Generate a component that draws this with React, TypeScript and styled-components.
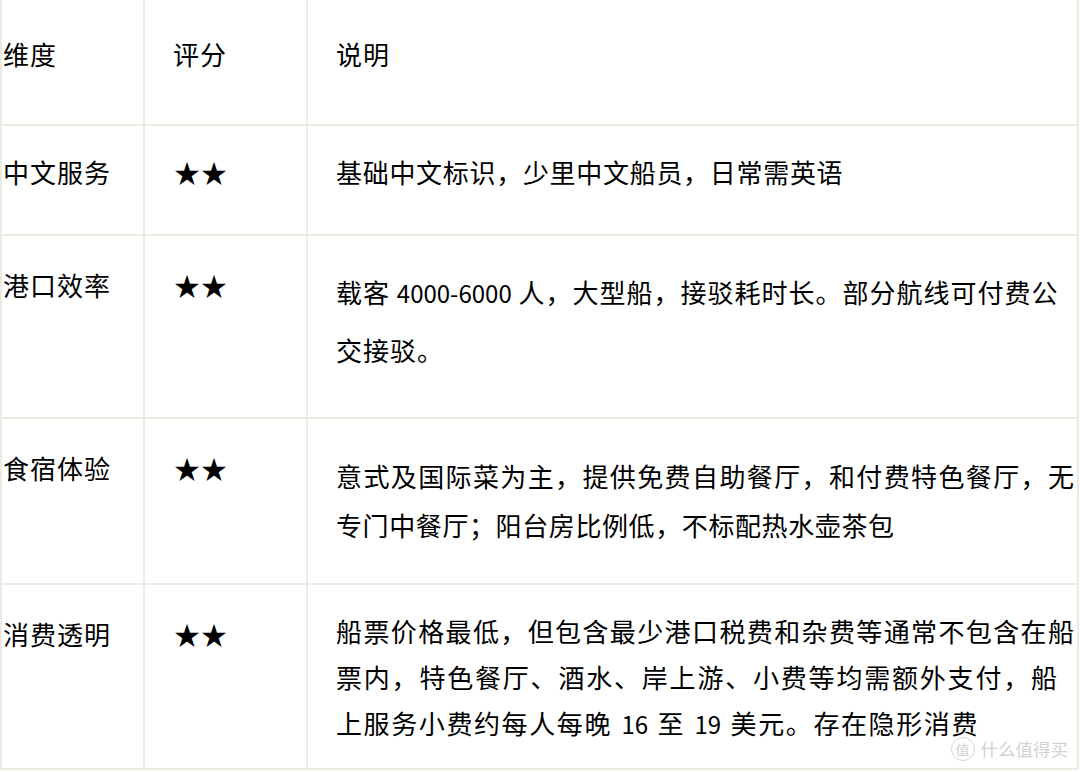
import React from 'react';
import styled, { createGlobalStyle } from 'styled-components';

const GlobalStyle = createGlobalStyle`
  html, body {
    margin: 0;
    padding: 0;
    background: #ffffff;
  }
  body {
    font-family: "Noto Sans CJK SC", "Noto Sans", sans-serif;
    color: #000000;
  }
`;

const Table = styled.div`
  position: relative;
  display: grid;
  grid-template-columns: 141px 161px 769px;
  grid-template-rows: 124px 108px 181px 164px 183px;
  gap: 2px;
  padding: 0 2px 2px 2px;
  width: fit-content;
  background: #edeae1;
`;

const Cell = styled.div<{ $top: number; $left: number; $lh?: number }>`
  background: #ffffff;
  padding-top: ${({ $top }) => $top}px;
  padding-left: ${({ $left }) => $left}px;
  font-family: "Noto Sans CJK SC", sans-serif;
  font-size: 26px;
  letter-spacing: 1px;
  line-height: ${({ $lh }) => $lh ?? 40}px;
  color: #000000;
  overflow: hidden;
`;

const Line = styled.span<{ $justify?: boolean; $spacing?: number; $word?: number }>`
  display: block;
  white-space: nowrap;
  text-align: ${({ $justify }) => ($justify ? 'justify' : 'left')};
  text-align-last: ${({ $justify }) => ($justify ? 'justify' : 'auto')};
  padding-right: ${({ $justify }) => ($justify ? '2px' : '0')};
  letter-spacing: ${({ $spacing }) => $spacing ?? 1}px;
  word-spacing: ${({ $word }) => $word ?? 0}px;
`;

const Num = styled.span`
  font-size: 24px;
  letter-spacing: 0;
`;

const Stars = styled.span`
  font-family: "Noto Sans CJK SC", sans-serif;
  letter-spacing: 1px;
`;

const Watermark = styled.div`
  position: absolute;
  right: 11px;
  bottom: 9px;
  display: flex;
  align-items: center;
  gap: 6px;
  color: #d2d2d2;
  font-family: "Noto Sans CJK SC", sans-serif;
  pointer-events: none;
`;

const WatermarkBadge = styled.span`
  width: 22px;
  height: 22px;
  border: 1.5px solid #d8d8d8;
  border-radius: 50%;
  display: flex;
  align-items: center;
  justify-content: center;
  font-size: 14px;
  line-height: 1;
`;

const WatermarkText = styled.span`
  font-size: 17.5px;
  line-height: 20px;
`;

type LineSpec = {
  content: React.ReactNode;
  justify?: boolean;
  spacing?: number;
  word?: number;
};

type Row = {
  name: string;
  top: number;
  descTop: number;
  descLh: number;
  lines: LineSpec[];
};

const rows: Row[] = [
  {
    name: '中文服务',
    top: 26,
    descTop: 26,
    descLh: 40,
    lines: [{ content: '基础中文标识，少里中文船员，日常需英语', spacing: 0.7 }],
  },
  {
    name: '港口效率',
    top: 29,
    descTop: 27,
    descLh: 57,
    lines: [
      {
        content: (
          <>
            载客 <Num>4000-6000</Num> 人，大型船，接驳耗时长。部分航线可付费公
          </>
        ),
      },
      { content: '交接驳。' },
    ],
  },
  {
    name: '食宿体验',
    top: 29,
    descTop: 32,
    descLh: 49,
    lines: [
      { content: '意式及国际菜为主，提供免费自助餐厅，和付费特色餐厅，无', justify: true },
      { content: '专门中餐厅；阳台房比例低，不标配热水壶茶包', spacing: 0.6 },
    ],
  },
  {
    name: '消费透明',
    top: 29,
    descTop: 23,
    descLh: 46,
    lines: [
      { content: '船票价格最低，但包含最少港口税费和杂费等通常不包含在船', justify: true },
      { content: '票内，特色餐厅、酒水、岸上游、小费等均需额外支付，船', spacing: 1.8 },
      {
        content: (
          <>
            上服务小费约每人每晚 <Num>16</Num> 至 <Num>19</Num> 美元。存在隐形消费
          </>
        ),
        spacing: 1.6,
        word: 2,
      },
    ],
  },
];

const App: React.FC = () => {
  return (
    <>
      <GlobalStyle />
      <Table>
        <Cell $top={34} $left={1}>维度</Cell>
        <Cell $top={34} $left={28}>评分</Cell>
        <Cell $top={34} $left={28}>说明</Cell>

        {rows.map((row) => (
          <React.Fragment key={row.name}>
            <Cell $top={row.top} $left={1}>{row.name}</Cell>
            <Cell $top={row.top} $left={29}>
              <Stars>★★</Stars>
            </Cell>
            <Cell $top={row.descTop} $left={28} $lh={row.descLh}>
              {row.lines.map((line, i) => (
                <Line key={i} $justify={line.justify} $spacing={line.spacing} $word={line.word}>
                  {line.content}
                </Line>
              ))}
            </Cell>
          </React.Fragment>
        ))}

        <Watermark>
          <WatermarkBadge>值</WatermarkBadge>
          <WatermarkText>什么值得买</WatermarkText>
        </Watermark>
      </Table>
    </>
  );
};

export default App;
